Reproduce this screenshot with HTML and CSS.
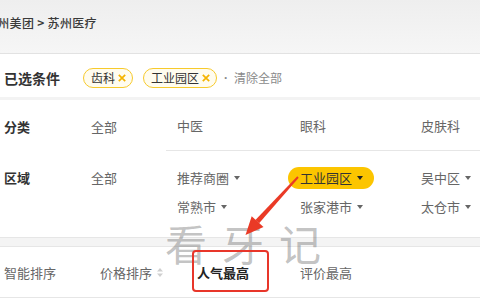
FILE: index.html
```html
<!DOCTYPE html>
<html lang="zh">
<head>
<meta charset="utf-8">
<link rel="stylesheet" href="styles.css">
</head>
<body>
<div class="page">
  <div class="topbar">
    <div class="crumb">苏州美团 <span class="gt">&gt;</span> 苏州医疗</div>
  </div>

  <div class="selected">
    <div class="label big">已选条件</div>
    <span class="tag">齿科<svg class="x" width="8" height="8" viewBox="0 0 8 8"><path d="M0.8 0.8 L7.2 7.2 M7.2 0.8 L0.8 7.2" stroke="#f5b400" stroke-width="1.7" fill="none"/></svg></span>
    <span class="tag">工业园区<svg class="x" width="8" height="8" viewBox="0 0 8 8"><path d="M0.8 0.8 L7.2 7.2 M7.2 0.8 L0.8 7.2" stroke="#f5b400" stroke-width="1.7" fill="none"/></svg></span>
    <span class="clear"><span class="dot">·</span>清除全部</span>
  </div>

  <div class="filters">
    <div class="frow first">
      <div class="label">分类</div>
      <div class="all">全部</div>
      <div class="opts line">
        <span class="opt">中医</span>
        <span class="opt">眼科</span>
        <span class="opt">皮肤科</span>
      </div>
    </div>
    <div class="frow second">
      <div class="label">区域</div>
      <div class="all">全部</div>
      <div class="opts">
        <span class="opt">推荐商圈<i class="caret"></i></span>
        <span class="opt"><span class="hl">工业园区<i class="caret dark"></i></span></span>
        <span class="opt">吴中区<i class="caret"></i></span>
        <span class="opt">常熟市<i class="caret"></i></span>
        <span class="opt">张家港市<i class="caret"></i></span>
        <span class="opt">太仓市<i class="caret"></i></span>
      </div>
    </div>
  </div>

  <div class="band"></div>

  <div class="sort">
    <span class="s">智能排序</span>
    <span class="s">价格排序<svg class="updown" width="6" height="9" viewBox="0 0 6 9"><polygon points="3,0 6,3.5 0,3.5" fill="#cfcfcf"/><polygon points="0,5.5 6,5.5 3,9" fill="#cfcfcf"/></svg></span>
    <span class="s active">人气最高</span>
    <span class="s">评价最高</span>
  </div>

  <div class="watermark">看牙记</div>
  <div class="redbox"></div>
  <svg class="arrow" width="480" height="300" viewBox="0 0 480 300">
    <polygon points="298.7,177.7 297.3,176.3 255.4,219.9 259.1,223.3" fill="#ea3a26"/>
    <polygon points="245.5,235 251.7,216.3 263.5,227.1" fill="#ea3a26"/>
  </svg>
</div>
</body>
</html>
```

FILE: styles.css
```css
* { box-sizing: border-box; }
html, body { margin: 0; padding: 0; }
body {
  width: 480px;
  height: 300px;
  overflow: hidden;
  background: #fff;
  font-family: "Noto Sans CJK SC", "Noto Sans", sans-serif;
  color: #333;
}
.page { position: relative; width: 480px; height: 300px; overflow: hidden; }

.topbar {
  height: 54px;
  background: linear-gradient(#eeeeee, #f6f6f6);
  border-bottom: 1px solid #e2e2e2;
  display: flex;
  align-items: center;
  padding-bottom: 8px;
}
.crumb {
  margin-left: -15px;
  font-size: 12px;
  font-weight: 500;
  color: #3a3a3a;
  letter-spacing: 0.3px;
  white-space: nowrap;
}
.crumb .gt { font-weight: 700; }

.selected {
  display: flex;
  align-items: center;
  height: 46px;
  padding: 4px 0 0 4px;
  border-bottom: 3px solid #f3f3f3;
}
.label {
  font-size: 13px;
  font-weight: 700;
  color: #333;
}
.label.big { font-size: 14px; width: 79px; }
.tag {
  display: inline-flex;
  align-items: center;
  height: 20px;
  padding: 0 6px 0 7px;
  border: 1.5px solid #f7ca2c;
  border-radius: 10px;
  background: #fffcef;
  font-size: 12px;
  color: #333;
  margin-right: 10px;
}
.tag .x { margin-left: 3px; }
.clear { font-size: 12px; color: #8a8a8a; margin-left: -3px; display: inline-flex; align-items: center; }
.clear .dot { font-family: "Liberation Sans", sans-serif; font-weight: 700; margin-right: 6px; }

.frow {
  display: grid;
  grid-template-columns: 91px 75px 1fr;
}
.frow .label { padding-left: 4px; }
.frow.first { height: 51px; align-items: center; }
.frow.first .label, .frow.first .all { padding-top: 1px; }
.all { font-size: 13px; color: #666; }
.opts {
  display: grid;
  grid-template-columns: 123px 121px 80px;
  padding-left: 11px;
  font-size: 13px;
  color: #666;
}
.opts.line {
  height: 51px;
  align-items: center;
  border-bottom: 1px solid #e6e6e6;
  padding-top: 1px;
}
.frow.second { height: 86px; padding-top: 16px; }
.frow.second .label, .frow.second .all { line-height: 22px; }
.frow.second .opts { row-gap: 7px; grid-auto-rows: 22px; }
.opt { display: inline-flex; align-items: center; line-height: 22px; white-space: nowrap; }
.caret {
  display: inline-block;
  width: 0; height: 0;
  border-left: 3.5px solid transparent;
  border-right: 3.5px solid transparent;
  border-top: 4px solid #666;
  margin-left: 5px;
}
.caret.dark { border-top-color: #222; }
.hl {
  display: inline-flex;
  align-items: center;
  height: 22px;
  margin-left: -12px;
  padding: 0 11px 0 12px;
  border-radius: 11px;
  background: #fcc500;
  color: #333;
}

.band {
  height: 10px;
  background: #f4f4f4;
  border-top: 1px solid #e6e6e6;
  border-bottom: 1px solid #e6e6e6;
}

.sort {
  display: grid;
  grid-template-columns: 96px 97px 103px auto;
  align-items: center;
  height: 51px;
  padding-left: 4px;
  border-bottom: 1px solid #e6e6e6;
  font-size: 13px;
  color: #666;
}
.s { display: inline-flex; align-items: center; white-space: nowrap; }
.s.active { color: #222; font-weight: 700; }
.updown { margin-left: 5px; }

.watermark {
  position: absolute;
  left: 165px;
  top: 222px;
  font-size: 42px;
  line-height: 42px;
  letter-spacing: 15px;
  color: rgba(100, 100, 100, 0.4);
  white-space: nowrap;
  font-weight: 400;
}
.redbox {
  position: absolute;
  left: 192px;
  top: 250px;
  width: 77px;
  height: 42px;
  border: 2px solid #e8362a;
  border-radius: 4px;
}
.arrow { position: absolute; left: 0; top: 0; }
```
